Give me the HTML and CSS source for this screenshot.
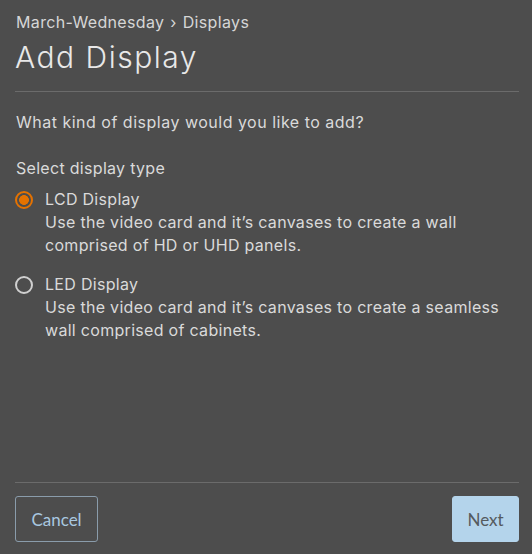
FILE: index.html
```html
<!DOCTYPE html>
<html>
<head>
<meta charset="utf-8">
<link rel="stylesheet" href="styles.css">
</head>
<body>
<div class="page">
  <header class="head">
    <div class="crumb">March-Wednesday <span class="sep">›</span> Displays</div>
    <h1 class="title">Add Display</h1>
  </header>
  <main class="content">
    <p class="question">What kind of display would you like to add?</p>
    <div class="group-label">Select display type</div>
    <div class="option">
      <span class="radio checked"></span>
      <div class="opt-text">
        <div class="opt-title">LCD Display</div>
        <div class="opt-desc">Use the video card and it’s canvases to create a wall comprised of HD or UHD panels.</div>
      </div>
    </div>
    <div class="option">
      <span class="radio"></span>
      <div class="opt-text">
        <div class="opt-title">LED Display</div>
        <div class="opt-desc">Use the video card and it’s canvases to create a seamless wall comprised of cabinets.</div>
      </div>
    </div>
  </main>
  <footer class="foot">
    <button class="btn btn-outline">Cancel</button>
    <button class="btn btn-primary">Next</button>
  </footer>
</div>
</body>
</html>
```
FILE: styles.css
```css
html, body {
  margin: 0;
  padding: 0;
  background: #4d4d4d;
}
body {
  font-family: "Inter", "Open Sans", sans-serif;
  color: #dadada;
  letter-spacing: 0.3px;
}
.page {
  box-sizing: border-box;
  width: 532px;
  height: 554px;
  padding: 0 13px 0 15px;
  display: flex;
  flex-direction: column;
}
.head {
  padding-top: 12px;
  border-bottom: 1px solid #6b6b6b;
  padding-bottom: 14px;
}
.crumb {
  font-size: 16px;
  letter-spacing: 0.35px;
  line-height: 20px;
  padding-left: 1px;
  color: #d6d6d6;
}
.sep { margin: 0 1px; }
.title {
  margin: 5px 0 0;
  font-weight: 300;
  font-size: 30px;
  letter-spacing: 1.5px;
  line-height: 40px;
  color: #e8e8e8;
}
.content {
  flex: 1;
  padding-left: 1px;
}
.question {
  margin: 19px 0 0;
  font-size: 16px;
  letter-spacing: 0.5px;
  line-height: 22px;
}
.group-label {
  margin-top: 24px;
  font-size: 16px;
  line-height: 22px;
}
.option {
  display: flex;
  gap: 12px;
  margin-top: 9px;
}
.option + .option { margin-top: 16px; }
.radio {
  flex: none;
  box-sizing: border-box;
  width: 18px;
  height: 18px;
  margin-top: 3px;
  margin-left: -1px;
  border-radius: 50%;
  border: 2px solid #d0d0d0;
}
.radio.checked {
  border-color: #e57200;
  background: radial-gradient(circle, #e57200 0 4.6px, transparent 5.2px);
}
.opt-title, .opt-desc {
  font-size: 16px;
  line-height: 23px;
}
.opt-desc { padding-right: 8px; }
.foot {
  border-top: 1px solid #6b6b6b;
  display: flex;
  justify-content: space-between;
  align-items: flex-start;
  padding-top: 13px;
  height: 72px;
  box-sizing: border-box;
}
.btn {
  font-family: "Lato", sans-serif;
  font-size: 17px;
  height: 46px;
  border-radius: 3px;
  padding: 0;
}
.btn-outline {
  background: transparent;
  border: 1px solid #8a9cab;
  color: #a9c8e0;
  width: 83px;
}
.btn-primary {
  background: #b4d4eb;
  border: 1px solid #b4d4eb;
  color: #555a5e;
  width: 67px;
}
```
